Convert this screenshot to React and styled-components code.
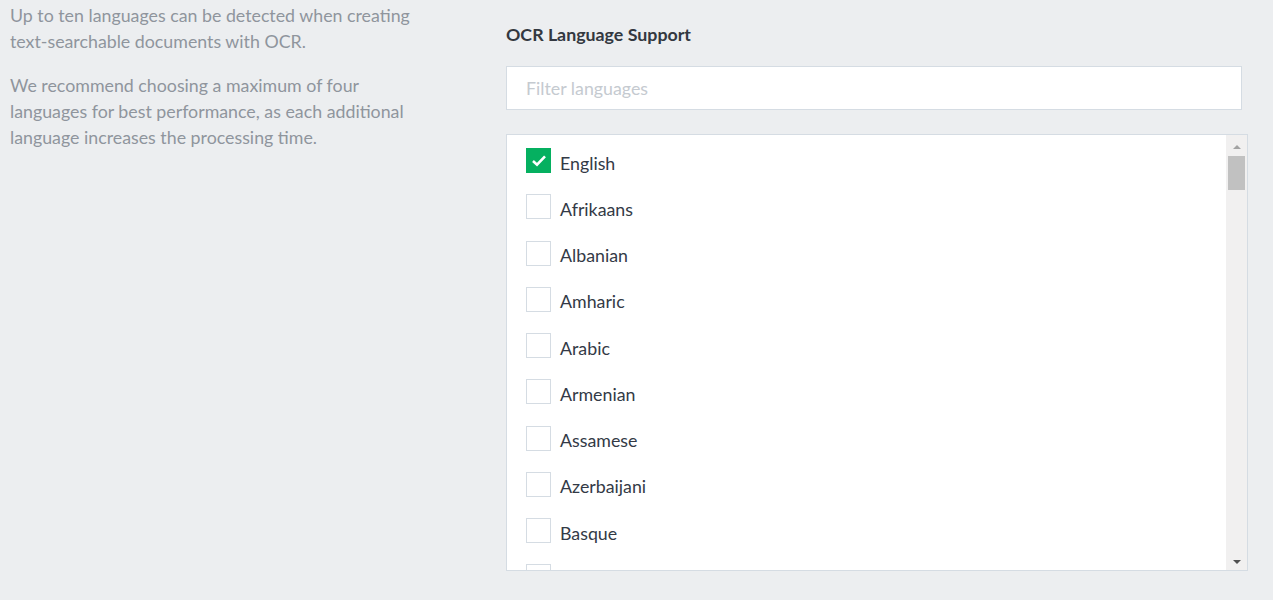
import React, { useState } from "react";
import styled, { createGlobalStyle } from "styled-components";

const GlobalStyle = createGlobalStyle`
    html, body {
        margin: 0;
        padding: 0;
        background: #eceef0;
        font-family: "Lato", "Open Sans", sans-serif;
    }
`;

const Page = styled.div`
    display: flex;
    height: 600px;
    overflow: hidden;
`;

const Aside = styled.div`
    width: 414px;
    padding: 2px 0 0 10px;
    flex-shrink: 0;
`;

const Note = styled.p`
    margin: 0 0 18px;
    font-size: 17.8px;
    line-height: 26px;
    color: #8f959d;
`;

const Main = styled.div`
    margin-left: 82px;
    width: 742px;
    padding-top: 24px;
`;

const Heading = styled.h3`
    margin: 0 0 22px;
    font-size: 17.8px;
    line-height: 20px;
    font-weight: 700;
    color: #333840;
`;

const Filter = styled.input`
    box-sizing: border-box;
    width: 736px;
    height: 44px;
    padding: 0 19px;
    border: 1px solid #d5dce3;
    background: #fff;
    font-family: inherit;
    font-size: 17.8px;
    color: #333840;
    outline: none;

    &::placeholder {
        color: #c5cad0;
    }
`;

const ListBox = styled.div`
    margin-top: 24px;
    box-sizing: border-box;
    height: 437px;
    border: 1px solid #d5dce3;
    background: #fff;
    display: flex;
`;

const List = styled.ul`
    flex: 1;
    margin: 0;
    padding: 13px 19px 0;
    list-style: none;
    overflow: hidden;
`;

const Row = styled.li`
    display: flex;
    align-items: center;
    gap: 9px;
    height: 25px;
    margin-bottom: 21.25px;
    cursor: pointer;
`;

const Box = styled.span`
    box-sizing: border-box;
    width: 25px;
    height: 25px;
    flex-shrink: 0;
    display: flex;
    align-items: center;
    justify-content: center;
    background: ${(p) => (p.checked ? "#05b060" : "#fff")};
    border: 1px solid ${(p) => (p.checked ? "#05b060" : "#d5dce3")};
`;

const Label = styled.span`
    font-size: 17.8px;
    color: #333a46;
    padding-top: 4px;
`;

const Track = styled.div`
    width: 21px;
    background: #f1f0f0;
    display: flex;
    flex-direction: column;
    align-items: center;
`;

const Arrow = styled.div`
    width: 0;
    height: 0;
    margin: ${(p) => (p.down ? "auto 0 6px" : "10px 0 0")};
    border-left: 4px solid transparent;
    border-right: 4px solid transparent;
    ${(p) =>
        p.down
            ? "border-top: 4px solid #505050;"
            : "border-bottom: 4px solid #a3a3a3;"}
`;

const Thumb = styled.div`
    width: 17px;
    height: 34px;
    margin-top: 7px;
    background: #c1c1c1;
`;

const languages = [
    "English",
    "Afrikaans",
    "Albanian",
    "Amharic",
    "Arabic",
    "Armenian",
    "Assamese",
    "Azerbaijani",
    "Basque",
    "Belarusian",
];

const App = () => {
    const [selected, setSelected] = useState(["English"]);

    const toggle = (lang) => {
        setSelected(
            selected.includes(lang)
                ? selected.filter((l) => l !== lang)
                : [...selected, lang]
        );
    };

    return (
        <Page>
            <GlobalStyle />
            <Aside>
                <Note>
                    Up to ten languages can be detected when creating
                    text-searchable documents with OCR.
                </Note>
                <Note>
                    We recommend choosing a maximum of four languages for best
                    performance, as each additional language increases the
                    processing time.
                </Note>
            </Aside>
            <Main>
                <Heading>OCR Language Support</Heading>
                <Filter placeholder="Filter languages" />
                <ListBox>
                    <List>
                        {languages.map((lang) => {
                            const checked = selected.includes(lang);
                            return (
                                <Row key={lang} onClick={() => toggle(lang)}>
                                    <Box checked={checked}>
                                        {checked && (
                                            <svg width="16" height="13" viewBox="0 0 16 13">
                                                <path
                                                    d="M2 7 L6 10.6 L14 2.4"
                                                    fill="none"
                                                    stroke="#fff"
                                                    strokeWidth="2.6"
                                                />
                                            </svg>
                                        )}
                                    </Box>
                                    <Label>{lang}</Label>
                                </Row>
                            );
                        })}
                    </List>
                    <Track>
                        <Arrow />
                        <Thumb />
                        <Arrow down />
                    </Track>
                </ListBox>
            </Main>
        </Page>
    );
};

export default App;
